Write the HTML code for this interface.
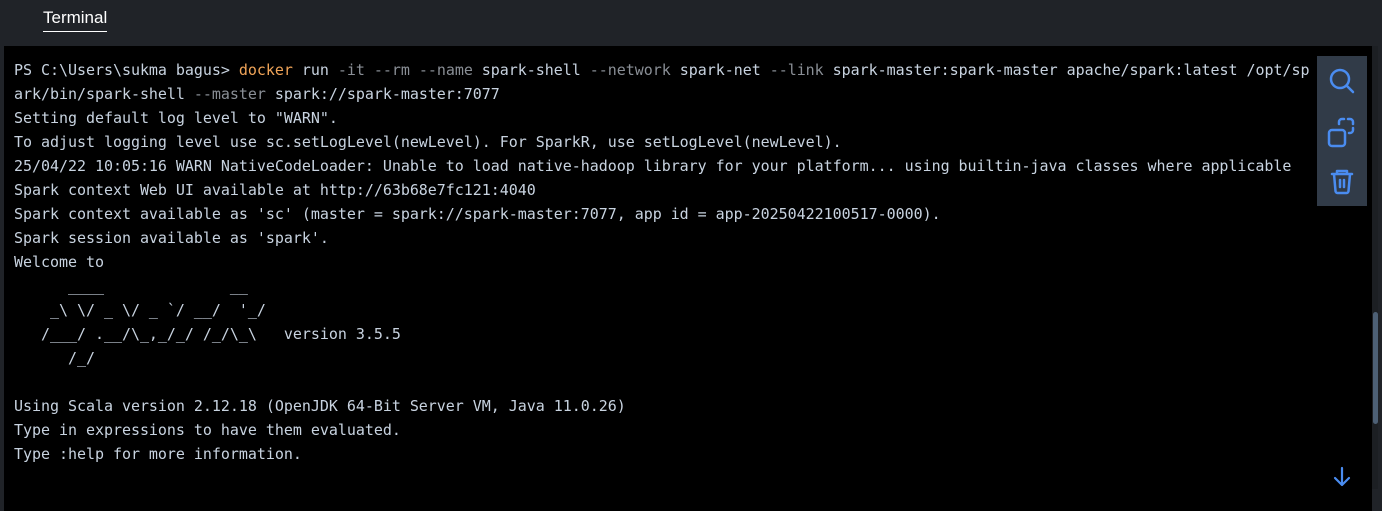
<!DOCTYPE html>
<html><head><meta charset="utf-8"><style>
html,body{margin:0;padding:0;width:1382px;height:511px;overflow:hidden;background:#202328;}
.hdr{position:absolute;left:0;top:0;width:1382px;height:46px;background:#202328;}
.tab{position:absolute;left:43px;top:8px;font:17px "Liberation Sans",sans-serif;color:#fff;padding-bottom:3px;border-bottom:1.5px solid #fff;}
.term{position:absolute;left:4px;top:46px;width:1368px;height:443px;background:#000;}
.bot{position:absolute;left:4px;top:489px;width:1368px;height:22px;background:#000;}
pre{position:absolute;left:10px;top:12px;margin:0;font:15px/24px "DejaVu Sans Mono","Liberation Mono",monospace;letter-spacing:-0.035px;color:#c8d3e0;white-space:pre;}
.o{color:#f0a458}.g{color:#8a8f96}
.tools{position:absolute;left:1317px;top:56px;width:50px;height:150px;background:#313b48;}
.sb{position:absolute;left:1372px;top:46px;width:6px;height:443px;background:#1c1f23;}
.thumb{position:absolute;left:1373px;top:312px;width:5px;height:112px;background:#4d6075;border-radius:3px;}
</style></head><body>
<div class="hdr"><div class="tab">Terminal</div></div>
<div class="term">
<pre>PS C:\Users\sukma bagus&gt; <span class="o">docker</span> run <span class="g">-it --rm --name</span> spark-shell <span class="g">--network</span> spark-net <span class="g">--link</span> spark-master:spark-master apache/spark:latest /opt/sp
ark/bin/spark-shell <span class="g">--master</span> spark://spark-master:7077
Setting default log level to "WARN".
To adjust logging level use sc.setLogLevel(newLevel). For SparkR, use setLogLevel(newLevel).
25/04/22 10:05:16 WARN NativeCodeLoader: Unable to load native-hadoop library for your platform... using builtin-java classes where applicable
Spark context Web UI available at http://63b68e7fc121:4040
Spark context available as 'sc' (master = spark://spark-master:7077, app id = app-20250422100517-0000).
Spark session available as 'spark'.
Welcome to
      ____              __
    _\ \/ _ \/ _ `/ __/  '_/
   /___/ .__/\_,_/_/ /_/\_\   version 3.5.5
      /_/

Using Scala version 2.12.18 (OpenJDK 64-Bit Server VM, Java 11.0.26)
Type in expressions to have them evaluated.
Type :help for more information.</pre>
</div>
<div class="bot"></div>
<div class="tools">
<svg width="50" height="150" viewBox="0 0 50 150" fill="none" stroke="#4a8cf0" stroke-width="2.5" stroke-linecap="round" stroke-linejoin="round">
<circle cx="23" cy="23" r="9"/><line x1="30" y1="30" x2="36" y2="36"/>
<rect x="12" y="74" width="16" height="16" rx="3"/>
<path d="M22 68 v-2 a3 3 0 0 1 3-3 h2 M31 63 h2 a3 3 0 0 1 3 3 v2 M36 72 v2 a3 3 0 0 1-3 3 h-1"/>
<path d="M15 118 h20 M20 118 v-3 h10 v3 M17 118 l1.5 17 a2 2 0 0 0 2 2 h9 a2 2 0 0 0 2-2 l1.5-17 M23 124 v7 M27 124 v7"/>
</svg>
</div>
<div class="sb"></div><div class="thumb"></div>
<svg style="position:absolute;left:1330px;top:465px" width="24" height="24" viewBox="0 0 24 24" fill="none" stroke="#4a8cf0" stroke-width="2.2" stroke-linecap="round" stroke-linejoin="round"><path d="M12 3 v17 M5 13 l7 7 7-7"/></svg>
</body></html>
